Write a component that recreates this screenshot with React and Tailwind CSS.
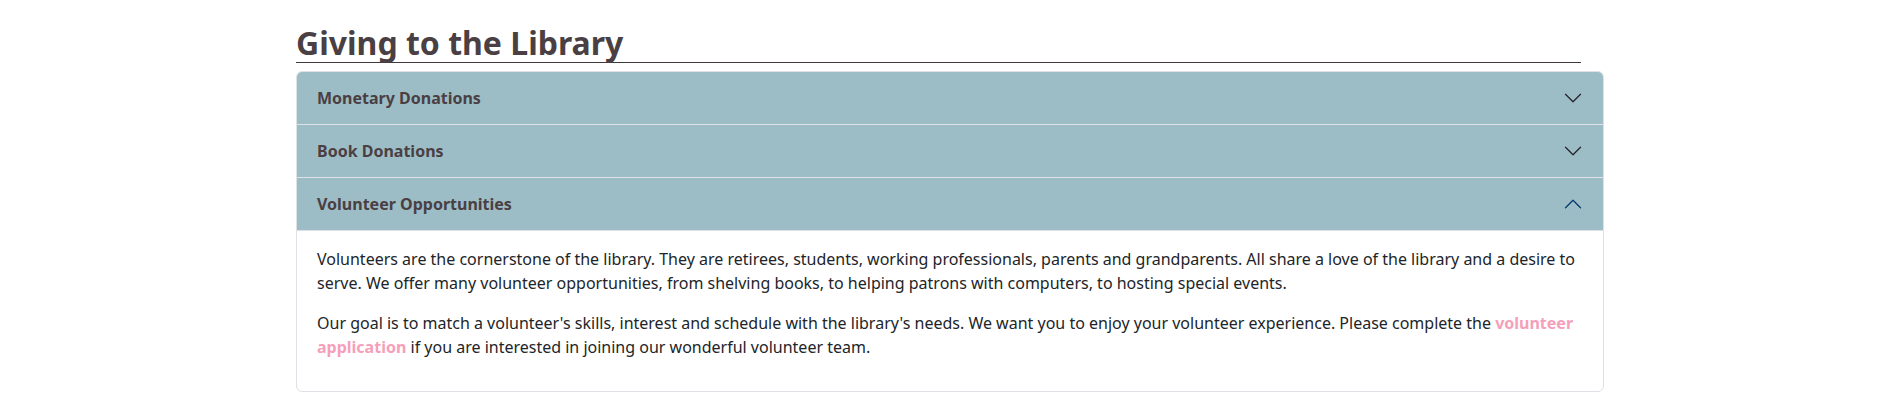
import { useState } from 'react';

const ITEMS = [
  { id: 'money', title: 'Monetary Donations' },
  { id: 'books', title: 'Book Donations' },
  { id: 'volunteer', title: 'Volunteer Opportunities' },
];

function Chevron({ open }) {
  return (
    <svg
      width="20"
      height="20"
      viewBox="0 0 16 16"
      fill="none"
      className={open ? 'shrink-0 rotate-180 text-[#0c3d6e]' : 'shrink-0 text-[#2a2a2e]'}
    >
      <path d="M2 5l6 6 6-6" stroke="currentColor" strokeWidth="1.1" strokeLinecap="round" strokeLinejoin="round" />
    </svg>
  );
}

export default function App() {
  const [open, setOpen] = useState('volunteer');

  return (
    <div className="min-h-[415px] bg-white font-['Noto_Sans',sans-serif] text-[#212529]">
      <div className="pl-[296px] pt-[24px]">
        <h2 className="w-[1285px] border-b border-[#3f383b] text-[32px] font-bold leading-[1.2] text-[#4a3f43]">
          Giving to the Library
        </h2>

        <div className="mt-[8px] w-[1308px] overflow-hidden rounded-[6px] border border-[#dee2e6]">
          {ITEMS.map((item, i) => {
            const isOpen = open === item.id;
            return (
              <div key={item.id} className={i > 0 ? 'border-t border-[#dee2e6]' : ''}>
                <button
                  onClick={() => setOpen(isOpen ? null : item.id)}
                  className="flex h-[52px] w-full items-center justify-between bg-[#9dbdc6] px-[20px] text-left text-[16px] font-bold text-[#4a3f43]"
                >
                  {item.title}
                  <Chevron open={isOpen} />
                </button>

                {isOpen && (
                  <div className="border-t border-[#dee2e6] px-[20px] pt-[16px] pb-[16px] text-[16px] leading-[24px]">
                    <p className="mb-[16px]">
                      Volunteers are the cornerstone of the library. They are retirees, students, working professionals,
                      parents and grandparents. All share a love of the library and a desire to serve. We offer many
                      volunteer opportunities, from shelving books, to helping patrons with computers, to hosting special
                      events.
                    </p>
                    <p className="mb-[16px]">
                      Our goal is to match a volunteer's skills, interest and schedule with the library's needs. We want
                      you to enjoy your volunteer experience. Please complete the{' '}
                      <a href="#" className="font-bold text-[#f59fba]">volunteer application</a> if you are interested
                      in joining our wonderful volunteer team.
                    </p>
                  </div>
                )}
              </div>
            );
          })}
        </div>
      </div>
    </div>
  );
}
